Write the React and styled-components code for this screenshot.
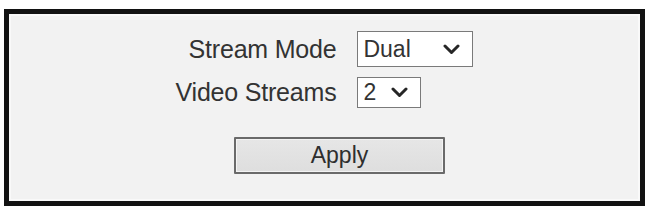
import styled, { createGlobalStyle } from 'styled-components';

const GlobalStyle = createGlobalStyle`
  html, body {
    margin: 0;
    padding: 0;
    background: #ffffff;
  }
  body {
    font-family: "Liberation Sans", Arial, sans-serif;
  }
  `;

const Frame = styled.section`
  box-sizing: border-box;
  display: flex;
  flex-direction: column;
  align-items: center;
  margin: 9px 0 0 4px;
  padding-top: 17px;
  width: 641px;
  height: 197px;
  border: 5px solid #121212;
  background-color: #f2f2f2;
  box-shadow: inset 0 0 0 2px #f9f9f9;
  `;

const Fields = styled.div`
  display: grid;
  grid-template-columns: auto auto;
  column-gap: 21px;
  row-gap: 10px;
  align-items: center;
  padding-left: 0;
  `;

const Label = styled.span`
  justify-self: end;
  font-size: 25px;
  line-height: 1;
  color: #333333;
  letter-spacing: -0.2px;
  `;

const SelectBox = styled.div`
  box-sizing: border-box;
  display: flex;
  align-items: center;
  justify-content: space-between;
  padding: 0 12px 0 5px;
  width: ${(p) => p.$width}px;
  height: ${(p) => p.$height}px;
  border: 1.5px solid #7a7a7a;
  background-color: #ffffff;
  font-size: 23px;
  color: #333333;
  `;

const Chevron = () => (
  <svg width="17" height="11" viewBox="0 0 17 11">
    <path d="M2 2 L8.5 8.5 L15 2" fill="none" stroke="#262626" strokeWidth="3" strokeLinecap="round" strokeLinejoin="round" />
  </svg>
);

const ApplyButton = styled.button`
  box-sizing: border-box;
  margin-top: 29px;
  margin-left: 30px;
  width: 211px;
  height: 37px;
  border: 2px solid #6a6a6a;
  border-radius: 1px;
  background: linear-gradient(#e6e6e6, #dedede);
  box-shadow: inset 0 0 0 1px #f3f3f3;
  font-family: "Liberation Sans", Arial, sans-serif;
  font-size: 23px;
  color: #2e2e2e;
  padding: 0;
  `;

const App = () => (
  <>
    <GlobalStyle />
    <Frame>
      <Fields>
        <Label>Stream Mode</Label>
        <SelectBox $width={116} $height={36}>
          Dual
          <Chevron />
        </SelectBox>
        <Label>Video Streams</Label>
        <SelectBox $width={64} $height={31}>
          2
          <Chevron />
        </SelectBox>
      </Fields>
      <ApplyButton>Apply</ApplyButton>
    </Frame>
  </>
);

export default App;
